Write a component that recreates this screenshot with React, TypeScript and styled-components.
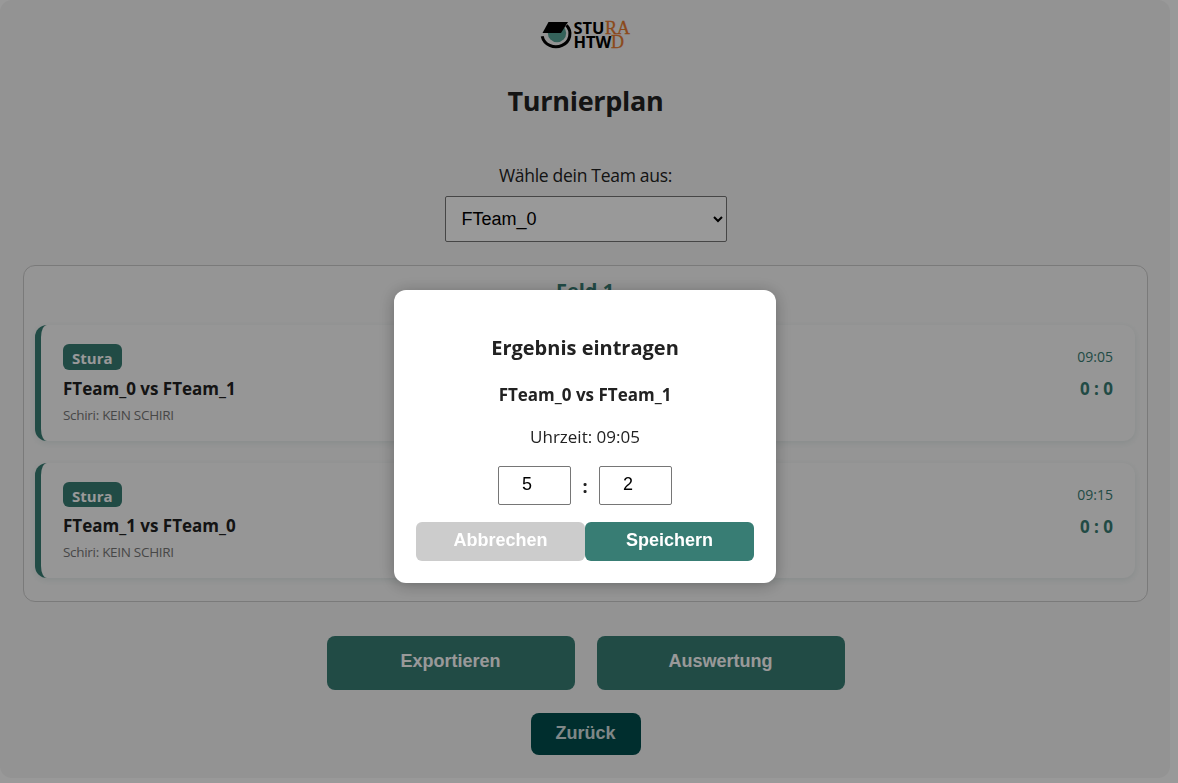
import React, { useState } from "react";
import styled, { createGlobalStyle, css } from "styled-components";

const teal = "#387d74";
const sans = `"Segoe UI", "Open Sans", "Noto Sans", sans-serif`;
const control = `Arial, "Liberation Sans", sans-serif`;

const GlobalStyle = createGlobalStyle`
  * { box-sizing: border-box; }
  html, body { margin: 0; height: 100%; overflow: hidden; background: #fff; }
  body { font-family: ${sans}; color: #222; }
  h1, h2, h3, p { margin: 0; }
`;

const Page = styled.main`
  display: flex;
  flex-direction: column;
  align-items: center;
  width: 1170px;
  height: 778px;
  padding: 20px 22px 0 23px;
  border-radius: 12px;
  background: #f5f5f5;
`;

const Logo = styled.svg`
  display: block;
  width: 92px;
  height: 30px;
  flex: none;
`;

const Title = styled.h1`
  margin-top: 32px;
  font-size: 27px;
  line-height: 38px;
  letter-spacing: -0.3px;
`;

const TeamPicker = styled.label`
  display: flex;
  flex-direction: column;
  align-items: center;
  margin-top: 42px;
  font-size: 17.5px;
  line-height: 26px;
  letter-spacing: -0.3px;
`;

const TeamSelect = styled.select`
  width: 282px;
  height: 46px;
  margin-top: 8px;
  padding: 0 12px;
  border: 1px solid #767676;
  border-radius: 2px;
  background: #fff;
  color: #000;
  font: 18px ${control};
`;

const Field = styled.section`
  display: flex;
  flex-direction: column;
  width: 1125px;
  height: 337px;
  margin-top: 23px;
  padding: 11px 12px 0 11px;
  border: 1px solid #ccc;
  border-radius: 12px;
  background: #f9f9f9;
`;

const FieldTitle = styled.h2`
  margin-bottom: 20px;
  color: ${teal};
  font-size: 20px;
  line-height: 28px;
  text-align: center;
`;

const MatchCard = styled.article<{ $height: number }>`
  display: flex;
  justify-content: space-between;
  height: ${(p) => p.$height}px;
  margin-bottom: 22px;
  padding: 19px 22px 0;
  border-left: 6px solid ${teal};
  border-radius: 12px;
  background: #fafafa;
  box-shadow: 0 2px 7px rgba(56, 125, 116, 0.12);
`;

const MatchInfo = styled.div<{ $end?: boolean }>`
  display: flex;
  flex-direction: column;
  align-items: ${(p) => (p.$end ? "flex-end" : "flex-start")};
`;

const Badge = styled.span<{ $height: number }>`
  height: ${(p) => p.$height}px;
  padding: 0 9px;
  border-radius: 6px;
  background: ${teal};
  color: #fff;
  font-size: 15px;
  font-weight: 700;
  line-height: 28px;
`;

const matchText = css`
  font-size: 17px;
  font-weight: 700;
  line-height: 26px;
`;

const Teams = styled.div`
  ${matchText}
  margin-top: 6px;
`;

const Referee = styled.div`
  color: #777;
  font-size: 13.5px;
  line-height: 20px;
  margin-top: 3px;
  letter-spacing: -0.3px;
`;

const Time = styled.div`
  color: ${teal};
  font-size: 14px;
  line-height: 26px;
`;

const Score = styled.div`
  ${matchText}
  margin-top: 6px;
  color: ${teal};
`;

const Actions = styled.div`
  display: flex;
  gap: 22px;
  margin-top: 34px;
`;

const Button = styled.button<{ $kind: "main" | "back" | "cancel" | "save" }>`
  padding: 0 0 3px;
  border: 0;
  color: #fff;
  font: 700 18px ${control};
  ${(p) =>
    p.$kind === "main" &&
    css`
      width: 248px;
      height: 54px;
      border-radius: 8px;
      background: ${teal};
    `}
  ${(p) =>
    p.$kind === "back" &&
    css`
      width: 110px;
      height: 42px;
      margin-top: 23px;
      padding-bottom: 1px;
      border-radius: 8px;
      background: #004d4d;
      color: #d5e2e2;
    `}
  ${(p) =>
    (p.$kind === "cancel" || p.$kind === "save") &&
    css`
      flex: 1;
      height: 39px;
      padding-bottom: 2px;
      border-radius: 6px;
      background: ${p.$kind === "save" ? teal : "#ccc"};
    `}
`;

const Overlay = styled.div`
  position: fixed;
  inset: 0;
  padding: 290px 0 0 394px;
  background: rgba(0, 0, 0, 0.4);
`;

const Dialog = styled.div`
  display: flex;
  flex-direction: column;
  align-items: center;
  width: 382px;
  height: 293px;
  padding: 44px 22px 0;
  border-radius: 12px;
  background: #fff;
  box-shadow: 0 2px 16px rgba(0, 0, 0, 0.3);
`;

const DialogTitle = styled.h3`
  font-size: 20px;
  line-height: 28px;
`;

const DialogTeams = styled.p`
  ${matchText}
  margin-top: 20px;
`;

const DialogTime = styled.p`
  margin-top: 16px;
  font-size: 17px;
  line-height: 26px;
`;

const ScoreEntry = styled.div`
  display: flex;
  align-items: center;
  justify-content: space-between;
  width: 174px;
  margin-top: 16px;
  font-size: 18px;
  font-weight: 700;
`;

const GoalInput = styled.input`
  width: 73px;
  height: 39px;
  padding: 0 1px 2px;
  border: 1px solid #767676;
  border-radius: 2px;
  color: #000;
  font: 18px ${control};
  text-align: center;
`;

const DialogButtons = styled.div`
  display: flex;
  align-self: stretch;
  margin-top: 17px;
`;

const matches = [
  { teams: "FTeam_0 vs FTeam_1", time: "09:05", height: 116, badge: 26 },
  { teams: "FTeam_1 vs FTeam_0", time: "09:15", height: 115, badge: 25 },
];

function SturaLogo() {
  return (
    <Logo viewBox="0 0 92 30" role="img" aria-label="StuRa HTWD">
      <path d="M2.2 16.2A14 13 0 1 0 26.5 5.2" fill="none" stroke="#000" strokeWidth="3" />
      <circle cx="17" cy="13" r="9.2" fill="#58a397" />
      <path d="M8.5 2H28L21 13H2.5Z" fill="#000" />
      <g fontFamily="Open Sans, sans-serif" fontWeight="700" fontSize="16.5">
        <text x="33.5" y="14" textLength="31" lengthAdjust="spacingAndGlyphs">STU</text>
        <text x="33.5" y="28" textLength="38" lengthAdjust="spacingAndGlyphs">HTW</text>
      </g>
      <g fontFamily="Liberation Serif, serif" fontSize="18" fill="#e87a2d" stroke="#e87a2d" strokeWidth="0.3">
        <text x="65" y="14" textLength="25" lengthAdjust="spacingAndGlyphs">RA</text>
        <text x="71" y="28" textLength="13" lengthAdjust="spacingAndGlyphs">D</text>
      </g>
    </Logo>
  );
}

export default function App() {
  const [team, setTeam] = useState("FTeam_0");
  const [home, setHome] = useState("5");
  const [away, setAway] = useState("2");
  return (
    <>
      <GlobalStyle />
      <Page>
        <SturaLogo />
        <Title>Turnierplan</Title>
        <TeamPicker>
          Wähle dein Team aus:
          <TeamSelect value={team} onChange={(e) => setTeam(e.target.value)}>
            <option>FTeam_0</option>
            <option>FTeam_1</option>
          </TeamSelect>
        </TeamPicker>
        <Field>
          <FieldTitle>Feld 1</FieldTitle>
          {matches.map((m) => (
            <MatchCard key={m.time} $height={m.height}>
              <MatchInfo>
                <Badge $height={m.badge}>Stura</Badge>
                <Teams>{m.teams}</Teams>
                <Referee>Schiri: KEIN SCHIRI</Referee>
              </MatchInfo>
              <MatchInfo $end>
                <Time>{m.time}</Time>
                <Score>0 : 0</Score>
              </MatchInfo>
            </MatchCard>
          ))}
        </Field>
        <Actions>
          <Button $kind="main">Exportieren</Button>
          <Button $kind="main">Auswertung</Button>
        </Actions>
        <Button $kind="back">Zurück</Button>
      </Page>
      <Overlay>
        <Dialog role="dialog">
          <DialogTitle>Ergebnis eintragen</DialogTitle>
          <DialogTeams>FTeam_0 vs FTeam_1</DialogTeams>
          <DialogTime>Uhrzeit: 09:05</DialogTime>
          <ScoreEntry>
            <GoalInput type="number" value={home} onChange={(e) => setHome(e.target.value)} />
            <span>:</span>
            <GoalInput type="number" value={away} onChange={(e) => setAway(e.target.value)} />
          </ScoreEntry>
          <DialogButtons>
            <Button $kind="cancel">Abbrechen</Button>
            <Button $kind="save">Speichern</Button>
          </DialogButtons>
        </Dialog>
      </Overlay>
    </>
  );
}
